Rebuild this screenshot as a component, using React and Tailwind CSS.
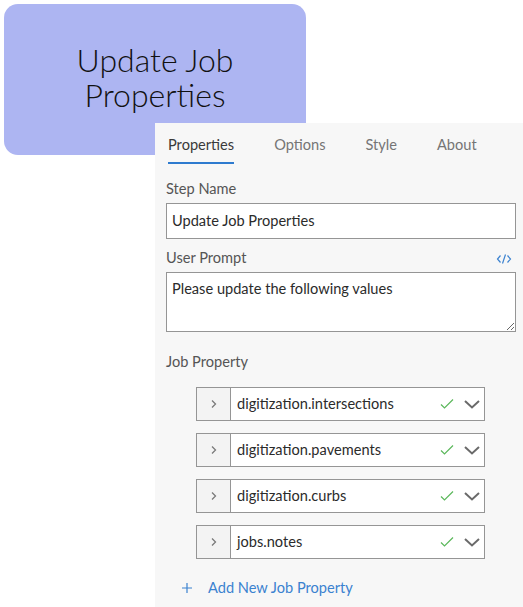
import React from "react";

const font = { fontFamily: "Lato, 'Open Sans', sans-serif" };

function Row({ name }) {
  return (
    <div className="flex h-[34px] w-[289px] border border-[#959595] bg-white">
      <div className="flex w-[34px] items-center justify-center border-r border-[#959595] bg-[#f3f3f3]">
        <svg width="8" height="10" viewBox="0 0 8 10" fill="none">
          <path d="M2 1.5 L5.5 5 L2 8.5" stroke="#7a7a7a" strokeWidth="1.3" />
        </svg>
      </div>
      <div className="flex flex-1 items-center pl-[6px] pb-[1px] text-[14.6px] text-[#2b2b2b]">{name}</div>
      <div className="flex items-center pr-[3px]">
        <svg width="16" height="12" viewBox="0 0 16 12" fill="none" className="mr-[8px]">
          <path d="M2 6.5 L5.5 10 L14 1.5" stroke="#5cb85c" strokeWidth="1.2" />
        </svg>
        <svg width="18" height="12" viewBox="0 0 18 12" fill="none">
          <path d="M2 3 L9 9.5 L16 3" stroke="#6a6a6a" strokeWidth="2" />
        </svg>
      </div>
    </div>
  );
}

export default function App() {
  return (
    <div className="relative h-[607px] w-[523px] overflow-hidden bg-white" style={font}>
      <div className="ml-[4px] mt-[4px] flex h-[151px] w-[302px] items-start justify-center rounded-[14px] bg-[#adb5f2] pt-[38px]">
        <div className="text-center text-[32px] font-light leading-[35px] text-[#111]">
          Update Job
          <br />
          Properties
        </div>
      </div>

      <div className="absolute left-[155px] top-[123px] h-[484px] w-[368px] bg-[#f7f7f7] pl-[11px] pr-[7px]">
        <div className="flex h-[41px] gap-10 pl-[2px] text-[14.6px]">
          <div className="flex flex-col justify-end">
            <div className="pb-[6px] text-[#3a3a3a]">Properties</div>
            <div className="h-[2px] bg-[#2e7bcf]" />
          </div>
          <div className="flex flex-col justify-end pb-[8px] text-[#757575]">Options</div>
          <div className="flex flex-col justify-end pb-[8px] text-[#757575]">Style</div>
          <div className="flex flex-col justify-end pb-[8px] text-[#757575]">About</div>
        </div>

        <div className="mt-[15px] text-[14.6px] leading-[20px] text-[#555]">Step Name</div>
        <div className="mt-[4px] flex h-[36px] items-center border border-[#959595] bg-white pl-[5px] text-[14.6px] text-[#2b2b2b]">
          Update Job Properties
        </div>

        <div className="mt-[9px] flex items-center justify-between text-[14.6px] leading-[20px] text-[#555]">
          <span>User Prompt</span>
          <svg width="16" height="12" viewBox="0 0 16 12" fill="none" className="mr-[4px] mt-[2px]">
            <path d="M4.5 2.5 L1.5 6 L4.5 9.5 M11.5 2.5 L14.5 6 L11.5 9.5 M9.5 1.5 L6.5 10.5" stroke="#3b82d0" strokeWidth="1.2" />
          </svg>
        </div>
        <textarea
          readOnly
          defaultValue="Please update the following values"
          className="mt-[4px] block h-[60px] w-full resize-y border border-[#959595] bg-white px-[5px] pt-[6px] pb-[6px] text-[14.6px] leading-[20px] text-[#2b2b2b] outline-none"
          style={font}
        />

        <div className="mt-[20px] text-[14.6px] leading-[20px] text-[#555]">Job Property</div>

        <div className="ml-[30px] mt-[15px] flex flex-col gap-[12px]">
          <Row name="digitization.intersections" />
          <Row name="digitization.pavements" />
          <Row name="digitization.curbs" />
          <Row name="jobs.notes" />
        </div>

        <div className="ml-[15px] mt-[19px] flex items-center text-[14.6px] leading-[20px] text-[#3b82d0]">
          <svg width="12" height="12" viewBox="0 0 12 12" fill="none" className="mr-[15px]">
            <path d="M6 1 V11 M1 6 H11" stroke="#3b82d0" strokeWidth="1.2" />
          </svg>
          <span>Add New Job Property</span>
        </div>
      </div>
    </div>
  );
}
